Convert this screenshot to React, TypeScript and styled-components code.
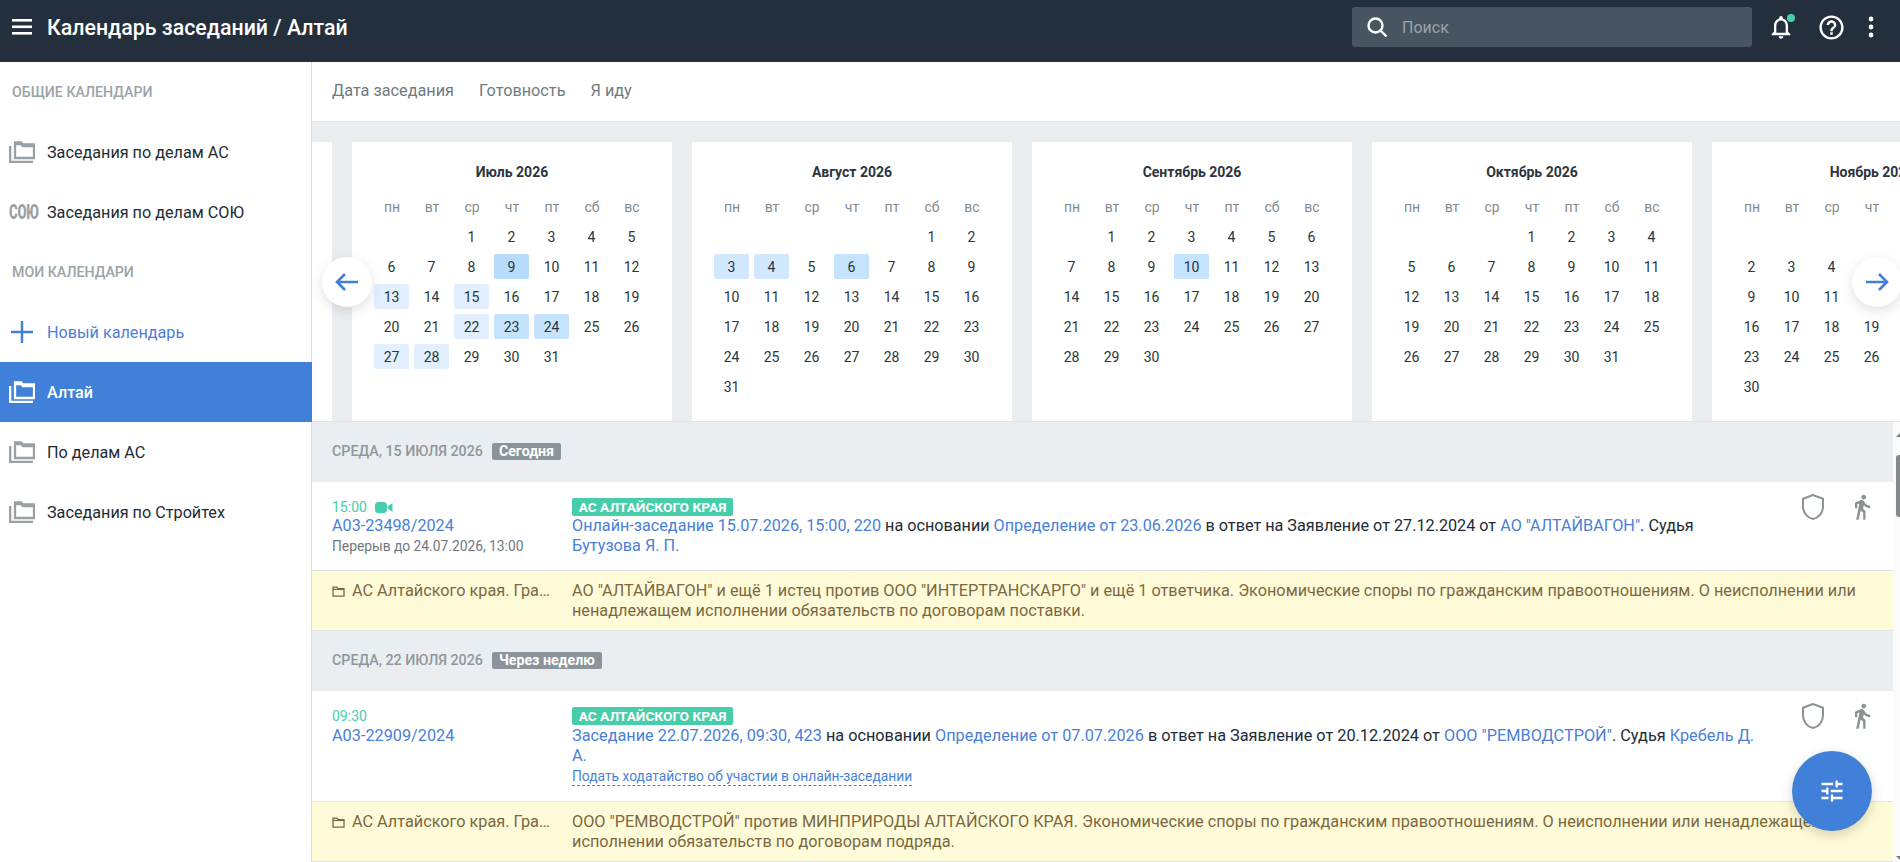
import React from "react";
import styled, { createGlobalStyle } from "styled-components";

const Global = createGlobalStyle`
  html, body { margin: 0; padding: 0; height: 100%; overflow: hidden; }
  body { font-family: Roboto, "Noto Sans", sans-serif; color: #212b36; background: #fff; }
  * { box-sizing: border-box; }
`;

const Page = styled.div`position: relative; display: flex; flex-direction: column; width: 1900px; height: 862px; overflow: hidden;`;
const Header = styled.header`display: flex; align-items: center; height: 62px; flex: none; background: #242f3d; color: #fff; padding: 0 15px 8px 12px;`;
const Title = styled.h1`margin: 0 0 0 15px; font-size: 21.35px; font-weight: 500; flex: 1;`;
const SearchBox = styled.div`display: flex; align-items: center; width: 400px; height: 40px; margin-right: 15px; background: #475562; border-radius: 3px; padding-left: 13px; gap: 13px; color: #9ca3a9; font-size: 16px;`;
const HeaderIcon = styled.span<{ $w: number; $gap: number }>`position: relative; display: flex; align-items: center; justify-content: center; width: ${p => p.$w}px; height: 40px; flex: none; margin-left: ${p => p.$gap}px;`;
const Dot = styled.span`position: absolute; top: 7px; right: 0; width: 8px; height: 8px; border-radius: 50%; background: #48cdaa;`;

const Body = styled.div`display: flex; flex: 1; min-height: 0;`;
const Side = styled.aside`width: 312px; flex: none; border-right: 1px solid #dcdfe2; display: flex; flex-direction: column; background: #fff;`;
const SideLabel = styled.div`height: 60px; display: flex; align-items: center; padding-left: 12px; font-size: 14.2px; font-weight: 500; color: #9aa3a6; text-transform: uppercase;`;
const SideRow = styled.div<{ $active?: boolean; $accent?: boolean }>`
  height: 60px; display: flex; align-items: center; font-size: 16.2px; margin-right: ${p => p.$active ? "-1px" : "0"};
  background: ${p => p.$active ? "#4080d8" : "transparent"};
  color: ${p => p.$active ? "#fff" : p.$accent ? "#4a80d8" : "#212b36"};
  font-weight: ${p => p.$active ? 500 : 400};
`;
const SideIcon = styled.span`width: 47px; flex: none; display: flex; padding-left: 9px; align-items: center;`;
const Soyu = styled.span`display: inline-block; width: 26px; font-size: 20px; font-weight: 900; color: #9aa0a4; transform: scaleX(.66); transform-origin: left center; letter-spacing: -0.4px; line-height: 1; white-space: nowrap;`;

const Main = styled.main`flex: 1; min-width: 0; display: flex; flex-direction: column;`;
const Tabs = styled.nav`height: 60px; flex: none; display: flex; align-items: center; gap: 25px; padding: 0 0 2px 20px; border-bottom: 1px solid #dfe3e5; font-size: 16.25px; color: #6f7b80;`;
const Strip = styled.section`position: relative; height: 300px; flex: none; background: #ebeef1; overflow: hidden; padding-top: 20px; border-bottom: 1px solid #dfe3e5;`;
const Track = styled.div`display: flex; gap: 20px; margin-left: -300px;`;
const Card = styled.div`width: 320px; height: 279px; flex: none; background: #fff; padding: 20px 20px 0;`;
const CardTitle = styled.div`text-align: center; font-size: 14px; font-weight: 700; color: #2c3540; line-height: 20px; height: 30px;`;
const DayGrid = styled.div`display: grid; grid-template-columns: repeat(7, 40px); grid-auto-rows: 30px;`;
const Wd = styled.div`display: flex; align-items: center; justify-content: center; font-size: 14px; color: #7f8b91;`;
const Day = styled.div<{ $level: number }>`
  display: flex; align-items: center; justify-content: center; font-size: 14px; color: #2b3540;
  margin: 2px 3px 3px 2px; border-radius: 2px;
  background: ${p => ["transparent", "#e1effe", "#d2e8fe", "#c6e3fd", "#b6dbfc"][p.$level]};
`;
const Arrow = styled.button<{ $side: "l" | "r" }>`
  position: absolute; top: 135px; ${p => p.$side === "l" ? "left: 10px" : "right: -2px"};
  width: 50px; height: 50px; border: 0; border-radius: 50%; background: #fff; padding: 0;
  box-shadow: 0 4px 12px rgba(60,70,80,.16); display: flex; align-items: center; justify-content: center;
`;
const ListWrap = styled.div`flex: 1; min-height: 0; display: flex;`;
const List = styled.div`flex: 1; min-width: 0; overflow: hidden;`;
const DateHead = styled.div`height: 60px; background: #ebeef1; display: flex; align-items: center; padding: 0 0 2px 20px; gap: 9px; font-size: 14.25px; font-weight: 500; color: #8e979b;`;
const Tag = styled.span`background: #8b949b; color: #fff; font-size: 14.2px; font-weight: 700; line-height: 17px; padding: 0 7px; border-radius: 2px;`;
const Time = styled.div`display: flex; align-items: center; gap: 8px; font-size: 14px; color: #48cdaa; height: 18px;`;
const Link = styled.a`color: #4a80d8; text-decoration: none;`;
const Break = styled.div`font-size: 13.8px; color: #6f777c; line-height: 21px;`;
const Court = styled.span`display: block; width: 161px; height: 18px; background: #48cdaa; color: #fff; font-size: 13.7px; font-weight: 700; line-height: 18px; text-align: center; border-radius: 2px; white-space: nowrap;`;
const EventRow = styled.div<{ $h: number; $lead: number; $size: number }>`
  display: grid; grid-template-columns: 240px 1190px 1fr; height: ${p => p.$h}px; padding-top: 16px; padding-left: 20px;
  background: #fff; border-bottom: 1px solid #dfe3e5; font-size: ${p => p.$size}px; line-height: 20px;
  ${Court}, ${Time} { margin-bottom: ${p => p.$lead}px; }
`;
const Petition = styled.a`display: inline-block; font-size: 13.8px; color: #4a80d8; line-height: 17px; border-bottom: 1px dashed #4a80d8;`;
const RowIcons = styled.div`display: flex; justify-content: flex-end; gap: 23px; padding-right: 17px; margin-top: -6px; height: 30px; align-items: center;`;
const Info = styled.div`display: grid; grid-template-columns: 240px 1fr; height: 60px; padding: 10px 12px 0 20px; background: #fffbd8; border-bottom: 1px solid #dfe3e5; font-size: 16.26px; line-height: 20px; color: #7a6843;`;
const Folder = styled.div`display: flex; align-items: center; height: 20px; gap: 7px; padding-right: 19px; min-width: 0;`;
const Clip = styled.span`overflow: hidden; white-space: nowrap; text-overflow: ellipsis;`;
const Scroll = styled.div`width: 7px; flex: none; background: #fafafa; display: flex; flex-direction: column; padding: 11px 0 2px 3px;`;
const ArrowUp = styled.span`width: 0; height: 0; border: 4px solid transparent; border-top: 0; border-bottom-color: #7c7f82;`;
const ArrowDown = styled.span`width: 0; height: 0; border: 4px solid transparent; border-bottom: 0; border-top-color: #7c7f82; margin-top: auto;`;
const Thumb = styled.span`height: 62px; margin-top: 18px; background: #85898c; border-radius: 3px 0 0 3px;`;
const Fab = styled.button`position: absolute; left: 1792px; top: 751px; width: 80px; height: 80px; border-radius: 50%; border: 0; padding: 0; background: #4080d8; box-shadow: 0 4px 12px rgba(60,60,40,.22); display: flex; align-items: center; justify-content: center;`;

const FolderStack = ({ c }: { c: string }) => (
  <svg width="26" height="22" viewBox="0 0 26 22" fill="none" stroke={c} strokeWidth="2.3">
    <path d="M1.2 5v15.8H24" />
    <path d="M6 1.5h6l2 2h11v13.5H6z" />
    <path d="M6 3h6l2 2h11" />
  </svg>
);
const SmallFolder = () => (
  <svg width="13" height="11" viewBox="0 0 13 11" fill="none" stroke="#7a6843" strokeWidth="1.3" style={{ flex: "none" }}>
    <path d="M1 1.2h4l1.2 1.4H12v7.6H1z" /><path d="M1 3.4h11" />
  </svg>
);
const Video = () => (
  <svg width="18" height="11" viewBox="0 0 18 11" fill="#48cdaa">
    <rect x="0" y="0" width="12" height="11" rx="3.5" /><path d="M13 4.2 17.5 1v9L13 6.8z" />
  </svg>
);
const Shield = () => (
  <svg width="24" height="28" viewBox="0 0 24 28" fill="none" stroke="#8b9296" strokeWidth="2">
    <path d="M12 2 2 5.8v7.4C2 19.6 6.2 24.8 12 26c5.8-1.2 10-6.4 10-12.8V5.8z" />
  </svg>
);
const Walk = () => (
  <svg width="28" height="28" viewBox="0 0 24 24" fill="#8b9296">
    <path d="M13.5 5.5c1.1 0 2-.9 2-2s-.9-2-2-2-2 .9-2 2 .9 2 2 2zM9.8 8.9L7 23h2.1l1.8-8 2.1 2v6h2v-7.5l-2.1-2 .6-3C14.8 12 16.8 13 19 13v-2c-1.9 0-3.5-1-4.3-2.4l-1-1.6c-.4-.6-1-1-1.7-1-.3 0-.5.1-.8.1L6 8.3V13h2V9.6l1.8-.7" />
  </svg>
);

const WEEK = ["пн", "вт", "ср", "чт", "пт", "сб", "вс"];
const MONTHS = [
  { name: "Июль 2026", start: 2, len: 31, marks: { 9: 4, 13: 1, 15: 1, 22: 1, 23: 3, 24: 3, 27: 1, 28: 1 } as Record<number, number> },
  { name: "Август 2026", start: 5, len: 31, marks: { 3: 2, 4: 2, 6: 3 } as Record<number, number> },
  { name: "Сентябрь 2026", start: 1, len: 30, marks: { 10: 3 } as Record<number, number> },
  { name: "Октябрь 2026", start: 3, len: 31, marks: {} as Record<number, number> },
  { name: "Ноябрь 2026", start: 6, len: 30, marks: {} as Record<number, number> },
];

const Month = ({ m }: { m: typeof MONTHS[number] }) => (
  <Card>
    <CardTitle>{m.name}</CardTitle>
    <DayGrid>
      {WEEK.map(w => <Wd key={w}>{w}</Wd>)}
      {Array.from({ length: m.start }, (_, i) => <span key={`e${i}`} />)}
      {Array.from({ length: m.len }, (_, i) => <Day key={i} $level={m.marks[i + 1] ?? 0}>{i + 1}</Day>)}
    </DayGrid>
  </Card>
);

const SIDE_ICON = <SideIcon><FolderStack c="#9aa0a4" /></SideIcon>;

export default function App() {
  return (
    <Page>
      <Global />
      <Header>
        <svg width="20" height="16" viewBox="0 0 20 16" fill="#fff" style={{ flex: "none" }}>
          <rect width="20" height="2.6" y="0" /><rect width="20" height="2.6" y="6.5" /><rect width="20" height="2.6" y="13" />
        </svg>
        <Title>Календарь заседаний / Алтай</Title>
        <SearchBox>
          <svg width="24" height="24" viewBox="0 0 24 24" fill="none" stroke="#fff" strokeWidth="2.4" style={{ flex: "none" }}>
            <circle cx="10.5" cy="10.5" r="7" /><path d="m15.5 15.5 6 6" />
          </svg>
          Поиск
        </SearchBox>
        <HeaderIcon $w={28} $gap={0}>
          <svg width="28" height="28" viewBox="0 0 24 24" fill="#fff"><path d="M12 22c1.1 0 2-.9 2-2h-4c0 1.1.9 2 2 2zm6-6v-5c0-3.07-1.63-5.64-4.5-6.32V4c0-.83-.67-1.5-1.5-1.5s-1.5.67-1.5 1.5v.68C7.64 5.36 6 7.92 6 11v5l-2 2v1h16v-1l-2-2zm-2 1H8v-6c0-2.48 1.51-4.5 4-4.5s4 2.02 4 4.5v6z" /></svg>
          <Dot />
        </HeaderIcon>
        <HeaderIcon $w={29} $gap={22}>
          <svg width="29" height="29" viewBox="0 0 24 24" fill="#fff"><path d="M11 18h2v-2h-2v2zm1-16C6.48 2 2 6.48 2 12s4.48 10 10 10 10-4.48 10-10S17.52 2 12 2zm0 18c-4.41 0-8-3.59-8-8s3.59-8 8-8 8 3.59 8 8-3.59 8-8 8zm0-14c-2.21 0-4 1.79-4 4h2c0-1.1.9-2 2-2s2 .9 2 2c0 2-3 1.75-3 5h2c0-2.25 3-2.5 3-5 0-2.21-1.79-4-4-4z" /></svg>
        </HeaderIcon>
        <HeaderIcon $w={28} $gap={11}>
          <svg width="6" height="22" viewBox="0 0 6 22" fill="#fff"><circle cx="3" cy="3" r="2.4" /><circle cx="3" cy="11" r="2.4" /><circle cx="3" cy="19" r="2.4" /></svg>
        </HeaderIcon>
      </Header>
      <Body>
        <Side>
          <SideLabel>Общие календари</SideLabel>
          <SideRow>{SIDE_ICON}Заседания по делам АС</SideRow>
          <SideRow><SideIcon><Soyu>СОЮ</Soyu></SideIcon>Заседания по делам СОЮ</SideRow>
          <SideLabel>Мои календари</SideLabel>
          <SideRow $accent>
            <SideIcon>
              <svg width="22" height="22" viewBox="0 0 22 22" stroke="#4080d8" strokeWidth="2.4" style={{ marginLeft: 2 }}><path d="M11 0v22M0 11h22" /></svg>
            </SideIcon>
            Новый календарь
          </SideRow>
          <SideRow $active><SideIcon><FolderStack c="#fff" /></SideIcon>Алтай</SideRow>
          <SideRow>{SIDE_ICON}По делам АС</SideRow>
          <SideRow>{SIDE_ICON}Заседания по Стройтех</SideRow>
        </Side>
        <Main>
          <Tabs><span>Дата заседания</span><span>Готовность</span><span>Я иду</span></Tabs>
          <Strip>
            <Track>
              <Card />
              {MONTHS.map(m => <Month key={m.name} m={m} />)}
            </Track>
            <Arrow $side="l">
              <svg width="26" height="22" viewBox="0 0 26 22" fill="none" stroke="#4080d8" strokeWidth="2.6"><path d="M24 11H3M11 3l-8 8 8 8" /></svg>
            </Arrow>
            <Arrow $side="r">
              <svg width="26" height="22" viewBox="0 0 26 22" fill="none" stroke="#4080d8" strokeWidth="2.6"><path d="M2 11h21M15 3l8 8-8 8" /></svg>
            </Arrow>
          </Strip>
          <ListWrap>
            <List>
              <DateHead>СРЕДА, 15 ИЮЛЯ 2026 <Tag>Сегодня</Tag></DateHead>
              <EventRow $h={89} $lead={0} $size={16.22}>
                <div>
                  <Time>15:00 <Video /></Time>
                  <Link>А03-23498/2024</Link>
                  <Break>Перерыв до 24.07.2026, 13:00</Break>
                </div>
                <div>
                  <Court>АС АЛТАЙСКОГО КРАЯ</Court>
                  <Link>Онлайн-заседание 15.07.2026, 15:00, 220</Link> на основании <Link>Определение от 23.06.2026</Link> в ответ на Заявление от 27.12.2024 от <Link>АО "АЛТАЙВАГОН"</Link>. Судья <Link>Бутузова Я. П.</Link>
                </div>
                <RowIcons><Shield /><Walk /></RowIcons>
              </EventRow>
              <Info>
                <Folder><SmallFolder /><Clip>АС Алтайского края. Гражданские правоотношения</Clip></Folder>
                <div>АО "АЛТАЙВАГОН" и ещё 1 истец против ООО "ИНТЕРТРАНСКАРГО" и ещё 1 ответчика. Экономические споры по гражданским правоотношениям. О неисполнении или ненадлежащем исполнении обязательств по договорам поставки.</div>
              </Info>
              <DateHead>СРЕДА, 22 ИЮЛЯ 2026 <Tag>Через неделю</Tag></DateHead>
              <EventRow $h={111} $lead={1} $size={16.27}>
                <div>
                  <Time>09:30</Time>
                  <Link>А03-22909/2024</Link>
                </div>
                <div>
                  <Court>АС АЛТАЙСКОГО КРАЯ</Court>
                  <Link>Заседание 22.07.2026, 09:30, 423</Link> на основании <Link>Определение от 07.07.2026</Link> в ответ на Заявление от 20.12.2024 от <Link>ООО "РЕМВОДСТРОЙ"</Link>. Судья <Link>Кребель Д. А.</Link>
                  <div><Petition>Подать ходатайство об участии в онлайн-заседании</Petition></div>
                </div>
                <RowIcons><Shield /><Walk /></RowIcons>
              </EventRow>
              <Info>
                <Folder><SmallFolder /><Clip>АС Алтайского края. Гражданские правоотношения</Clip></Folder>
                <div>ООО "РЕМВОДСТРОЙ" против МИНПРИРОДЫ АЛТАЙСКОГО КРАЯ. Экономические споры по гражданским правоотношениям. О неисполнении или ненадлежащем исполнении обязательств по договорам подряда.</div>
              </Info>
            </List>
            <Scroll><ArrowUp /><Thumb /><ArrowDown /></Scroll>
          </ListWrap>
        </Main>
      </Body>
      <Fab>
        <svg width="28" height="28" viewBox="0 0 24 24" fill="#fff"><path d="M3 17v2h6v-2H3zM3 5v2h10V5H3zm10 16v-2h8v-2h-8v-2h-2v6h2zM7 9v2H3v2h4v2h2V9H7zm14 4v-2H11v2h10zm-6-4h2V7h4V5h-4V3h-2v6z" /></svg>
      </Fab>
    </Page>
  );
}
